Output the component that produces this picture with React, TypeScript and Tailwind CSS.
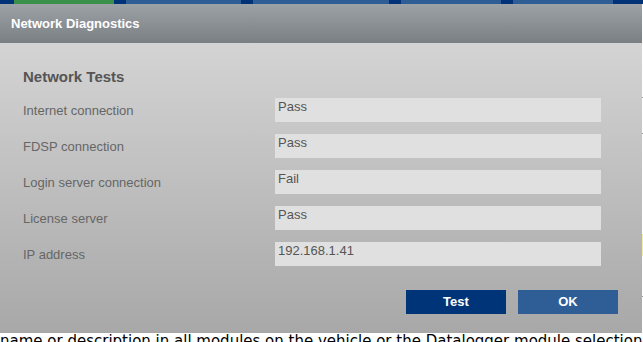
const tests = [
  { label: 'Internet connection', value: 'Pass' },
  { label: 'FDSP connection', value: 'Pass' },
  { label: 'Login server connection', value: 'Fail' },
  { label: 'License server', value: 'Pass' },
  { label: 'IP address', value: '192.168.1.41' },
];

function TabStrip() {
  return (
    <div className="flex h-[4px] bg-[#003278]">
      <div className="ml-[14px] w-[100px] bg-[#3a8f4a]" />
      <div className="ml-[12px] w-[115px] bg-[#2f5d96]" />
      <div className="ml-[12px] w-[136px] bg-[#2f5d96]" />
      <div className="ml-[12px] w-[100px] bg-[#2f5d96]" />
      <div className="ml-[12px] w-[100px] bg-[#2f5d96]" />
    </div>
  );
}

export default function App() {
  return (
    <div className="relative h-[342px] w-[643px] overflow-hidden bg-white font-['Liberation_Sans',Arial,sans-serif]">
      <TabStrip />
      <div className="relative">
        <div className="ml-[642px] mt-[93px] h-px w-px bg-[#999]" />
        <div className="ml-[642px] mt-[35px] h-px w-px bg-[#999]" />
        <div className="ml-[642px] mt-[100px] h-[22px] w-px bg-[#f5f0a0]" />
        <div className="ml-[642px] mt-[40px] h-px w-px bg-[#999]" />
      </div>
      <p className="absolute left-0 top-[332px] whitespace-nowrap font-['DejaVu_Sans',sans-serif] text-[15px] leading-[18px] text-black">
        name or description in all modules on the vehicle or the Datalogger module selection
      </p>

      {/* modal */}
      <div className="absolute left-0 top-[4px] w-[642px]">
        <div className="flex h-[39px] items-center bg-gradient-to-b from-[#9da2a7] to-[#7a7f84] pl-[11px]">
          <h2 className="text-[13px] font-bold text-white">Network Diagnostics</h2>
        </div>
        <div className="h-[290px] bg-gradient-to-b from-[#d4d4d4] to-[#a8a8a8] px-[23px] pt-[24px]">
          <h3 className="text-[15px] font-bold leading-[20px] text-[#555]">Network Tests</h3>
          <div className="mt-[11px] flex flex-col gap-[12px]">
            {tests.map((t) => (
              <div key={t.label} className="flex h-[24px] items-center">
                <span className="w-[252px] pt-[1px] text-[13px] text-[#666]">{t.label}</span>
                <div className="h-[24px] w-[326px] bg-[#e0e0e0] pl-[3px] pt-[1px] text-[13px] leading-[15px] text-[#555]">
                  {t.value}
                </div>
              </div>
            ))}
          </div>
          <div className="mt-[24px] flex justify-end gap-[12px] pr-[1px]">
            <button className="h-[24px] w-[100px] bg-[#003478] text-[13px] font-bold text-white">Test</button>
            <button className="h-[24px] w-[100px] bg-[#2f5d96] text-[13px] font-bold text-white">OK</button>
          </div>
        </div>
      </div>
    </div>
  );
}
